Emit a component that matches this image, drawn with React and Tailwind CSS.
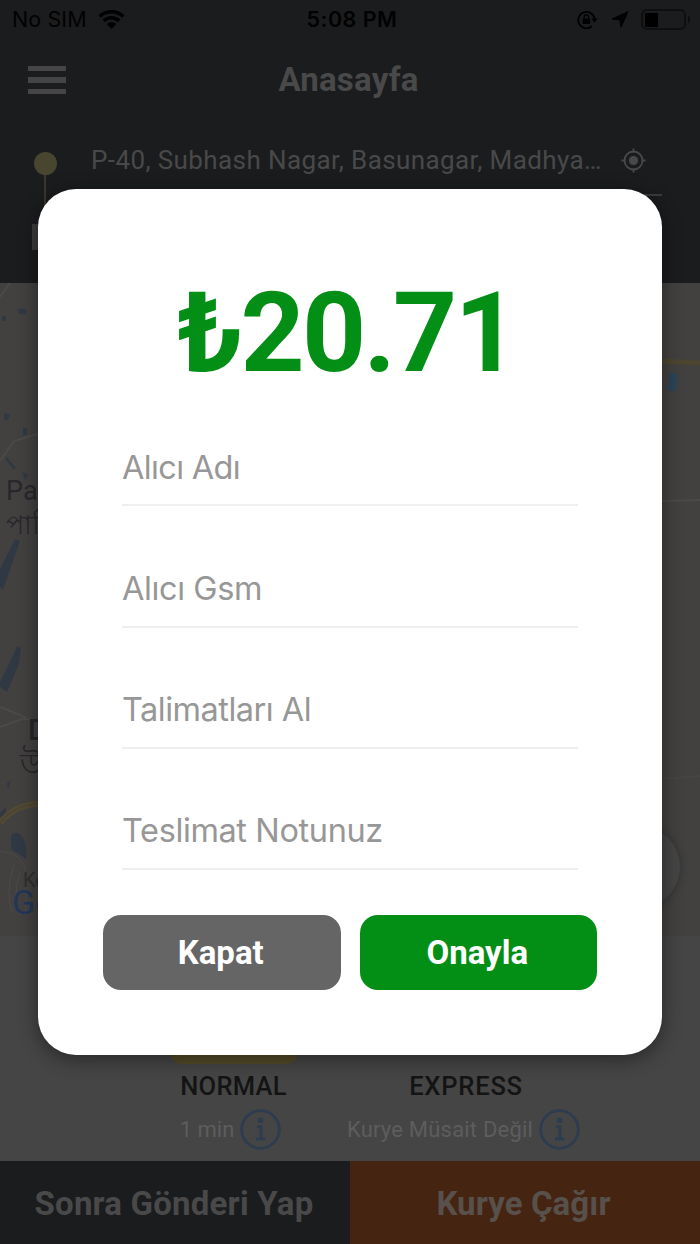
import { useState } from "react";

const fields = [
  { name: "name", label: "Alıcı Adı", tracking: "tracking-[-0.65px]" },
  { name: "gsm", label: "Alıcı Gsm", tracking: "tracking-[-0.4px]" },
  { name: "pickup", label: "Talimatları Al", tracking: "tracking-[-0.5px]" },
  { name: "note", label: "Teslimat Notunuz", tracking: "tracking-[-0.38px]" },
];

function StatusBar() {
  return (
    <div className="flex h-[39px] items-center justify-between pl-3 pr-[10px] font-['Inter',sans-serif] text-[21.5px] text-[#020202]">
      <div className="flex w-[240px] items-center gap-[11px]">
        <span className="tracking-[0.1px] whitespace-nowrap">No SIM</span>
        <svg width="27" height="19" viewBox="0 0 27 19" fill="currentColor">
          <path d="M13.5 0C8.4 0 3.8 2 .4 5.2l2.5 2.6A15.4 15.4 0 0 1 13.5 3.6c4.1 0 7.8 1.6 10.6 4.2l2.5-2.6A19 19 0 0 0 13.5 0z" />
          <path d="M13.5 6a13 13 0 0 0-9 3.6l2.5 2.6a9.4 9.4 0 0 1 13 0l2.5-2.6A13 13 0 0 0 13.5 6z" />
          <path d="M13.5 12a7 7 0 0 0-4.9 2l4.9 5 4.9-5a7 7 0 0 0-4.9-2z" />
        </svg>
      </div>
      <span className="pl-[2px] font-semibold tracking-[0.5px] whitespace-nowrap">5:08 PM</span>
      <div className="flex w-[240px] items-center justify-end">
        <svg width="21" height="20" viewBox="0 0 21 20" fill="none" stroke="currentColor" strokeWidth="1.8">
          <path d="M14.8 16.3A8.2 8.2 0 1 1 17.6 9" />
          <path d="M14.2 8.6h6.6l-3.3 4.2z" fill="currentColor" stroke="none" />
          <rect x="5.6" y="8.4" width="7.6" height="5.6" rx="0.8" fill="currentColor" stroke="none" />
          <path d="M7.2 8.8V7a2.2 2.2 0 0 1 4.4 0v1.8" strokeWidth="1.4" />
        </svg>
        <svg className="ml-[13px]" width="18" height="17" viewBox="0 0 18 17" fill="currentColor" stroke="currentColor" strokeLinejoin="round">
          <path d="M17 .7 1 8l7.8.8 1.2 7.4z" />
        </svg>
        <div className="ml-3 flex h-[21px] w-[45px] items-center rounded-[6px] border-2 border-[#0f0f10] pl-[2px]">
          <div className="h-[14px] w-[13px] bg-black" />
        </div>
        <div className="ml-[2px] h-[7px] w-[2px] rounded-r bg-[#0f0f10]" />
      </div>
    </div>
  );
}

function Header() {
  return (
    <header className="h-[283px] bg-[#1b1c1e] text-[#49494a]">
      <StatusBar />
      <div className="flex h-[82px] items-center px-7">
        <div className="flex w-[38px] flex-col gap-[6px]">
          <div className="h-[5.5px] bg-[#454547]" />
          <div className="h-[5.5px] bg-[#454547]" />
          <div className="h-[5.5px] bg-[#454547]" />
        </div>
        <h1 className="flex-1 pr-[41px] text-center text-[33px] font-bold tracking-[0.2px]">Anasayfa</h1>
      </div>
      <div className="flex pl-[32px] pt-[19px]">
        <div className="flex w-[26px] flex-col items-center pt-[12px]">
          <div className="h-[23px] w-[23px] rounded-full bg-[#48462f]" />
          <div className="h-[49px] w-[2px] bg-[#3b382b]" />
          <div className="h-[26px] w-[26px] bg-[#3c3c3d]" />
        </div>
        <div className="ml-[33px] flex h-[56px] w-[571px] items-start border-b-2 border-[#3c3c3d]">
          <span className="w-[530px] text-[26px] leading-[40px] tracking-[0.4px] whitespace-nowrap">
            P-40, Subhash Nagar, Basunagar, Madhya…
          </span>
          <svg className="mt-2" width="25" height="25" viewBox="0 0 25 25" fill="none" stroke="currentColor" strokeWidth="1.8">
            <circle cx="12.5" cy="12.5" r="9" />
            <circle cx="12.5" cy="12.5" r="4.6" fill="currentColor" stroke="none" />
            <path d="M12.5.5v4M12.5 20.5v4M.5 12.5h4M20.5 12.5h4" />
          </svg>
        </div>
      </div>
    </header>
  );
}

function Map() {
  return (
    <div className="relative h-[653px] overflow-hidden bg-[#424140]">
      <svg className="absolute inset-0" width="700" height="653" viewBox="0 0 700 653" fill="none">
        <g stroke="#4a4a49" strokeWidth="2">
          <path d="M0 14 10 0" />
          <path d="M0 178 14 158l24-7" />
          <path d="M0 424q16 6 26 11M0 444l22-8 16 1" />
          <path d="M662 218l38-1" />
          <path d="M662 496l38-3" stroke="#454544" />
          <path d="M0 568q25 3 26 24v40M14 582q-9 24-2 48M20 590q-8 20 0 42" strokeWidth="1" />
        </g>
        <g fill="#303943">
          <path d="M18 26h8v5h-7zM2 33h4v5H2zM4 130l6 2-3 6-3-2zM23 145h4v7h-4zM22 189l7 3-4 5z" />
          <path d="M6 173l10 12-2 2L6 177z" />
          <path d="M15 256l5 2L3 307l-3-3v-18z" />
          <path d="M17 363l4 2-2 16-12 28-7-5v-5l10-20z" />
          <path d="M7 500l4-3-3 10zM0 530l6-6v8l-6 6z" />
          <path d="M11 553q4-6 10-1 7 9 5 24l-15-10z" />
          <path d="M669 90h9l-2 18h-9z" fill="#2c4455" />
        </g>
        <path d="M0 540q14-18 38-19" stroke="#544a30" strokeWidth="6" />
        <path d="M0 540q14-18 38-19" stroke="#48443a" strokeWidth="1.5" />
        <path d="M662 78l38 2" stroke="#4c4530" strokeWidth="5" />
      </svg>
      <div className="absolute left-[6px] top-[192px] text-[27px] leading-[32px] text-[#27272d]">Panihati</div>
      <div className="absolute left-[6px] top-[226px] text-[27px] leading-[32px] font-medium text-[#27272d]">পানিহাটি</div>
      <div className="absolute left-[28px] top-[431px] text-[29px] leading-[32px] font-medium text-[#27272b]">Dum</div>
      <div className="absolute left-[20px] top-[465px] text-[30px] leading-[32px] font-medium text-[#27272b]">উত্তর</div>
      <div className="absolute left-[23px] top-[589px] text-[20px] leading-[16px] text-[#2e2e2e]">Kol</div>
      <div className="absolute left-[12px] top-[606px] text-[34px] leading-[26px] text-[#233658]">Google</div>
      <div className="absolute left-[596px] top-[542px] h-[84px] w-[84px] rounded-full bg-[#454545] shadow-[0_0_8px_rgba(0,0,0,0.25)]" />
    </div>
  );
}

function InfoIcon() {
  return (
    <svg width="41" height="41" viewBox="0 0 41 41" fill="none" stroke="#2d3c4f" strokeWidth="2.8">
      <circle cx="20.5" cy="20.5" r="18.8" />
      <circle cx="20.5" cy="11.3" r="2.8" fill="#2d3c4f" stroke="none" />
      <path d="M17 17.8h4v12M16 30h9.4" strokeWidth="3" />
    </svg>
  );
}

function Couriers() {
  return (
    <div className="grid h-[225px] grid-cols-2 bg-[#454545] px-[117px]">
      <div className="flex flex-col items-center">
        <div className="mt-[88px] flex h-[40px] w-[126px] items-end justify-center rounded-[10px] bg-[#544b28] pb-[5px] text-[16px] leading-[18px] font-bold text-[#2b2818]">
          NORMAL
        </div>
        <span className="mt-[6px] text-[25.5px] leading-[32px] font-medium tracking-[0.3px] text-[#141414]">NORMAL</span>
        <div className="mt-[7px] mr-[6px] flex items-center gap-[6px] text-[22px] text-[#5d5d5d]">
          <span className="whitespace-nowrap">1 min</span>
          <InfoIcon />
        </div>
      </div>
      <div className="flex flex-col items-center">
        <span className="mt-[134px] pr-px text-[25.5px] leading-[32px] font-medium tracking-[0.8px] text-[#141414]">EXPRESS</span>
        <div className="mt-[7px] mr-[6px] flex items-center gap-[6px] text-[22px] text-[#5d5d5d]">
          <span className="tracking-[0.2px] whitespace-nowrap">Kurye Müsait Değil</span>
          <InfoIcon />
        </div>
      </div>
    </div>
  );
}

export default function App() {
  const [values, setValues] = useState({});

  const handleChange = (e) => {
    setValues({ ...values, [e.target.name]: e.target.value });
  };

  return (
    <div className="relative h-[1244px] w-[700px] overflow-hidden font-['Roboto',sans-serif]">
      <Header />
      <Map />
      <Couriers />
      <div className="grid h-[83px] grid-cols-2 text-[33px] font-bold">
        <button className="bg-[#1b1c1e] pt-[2px] pr-[2px] tracking-[0.2px] text-[#49494a]">Sonra Gönderi Yap</button>
        <button className="bg-[#452412] pt-[2px] pr-[3px] tracking-[0.1px] text-[#58504b]">Kurye Çağır</button>
      </div>

      {/* Price dialog */}
      <div className="absolute inset-0 flex items-center justify-center">
        <div className="flex h-[866px] w-[624px] flex-col rounded-[38px] bg-white pt-[76px] shadow-[0_4px_20px_rgba(0,0,0,0.45)]">
          <div className="h-[136px] pr-[7px] text-center text-[112px] leading-[136px] font-bold tracking-[-2.8px] text-[#038e16]">
            ₺20.71
          </div>
          <div className="mx-[84px] mt-[31px] flex flex-col">
            {fields.map((f) => (
              <input
                key={f.name}
                name={f.name}
                value={values[f.name] || ""}
                onChange={handleChange}
                placeholder={f.label}
                className={`mb-[47px] h-[74.25px] border-b-2 border-[#efefef] pb-[2px] font-['Inter',sans-serif] text-[32.5px] outline-none placeholder:text-[#979797] ${f.tracking}`}
              />
            ))}
          </div>
          <div className="mx-[65px] -mt-[2px] grid grid-cols-2 gap-[19px] text-[33px] font-bold text-white">
            <button className="h-[75px] rounded-[18px] bg-[#656565] pr-[2px]">Kapat</button>
            <button className="h-[75px] rounded-[18px] bg-[#038e16] pr-[2px]">Onayla</button>
          </div>
        </div>
      </div>
    </div>
  );
}
